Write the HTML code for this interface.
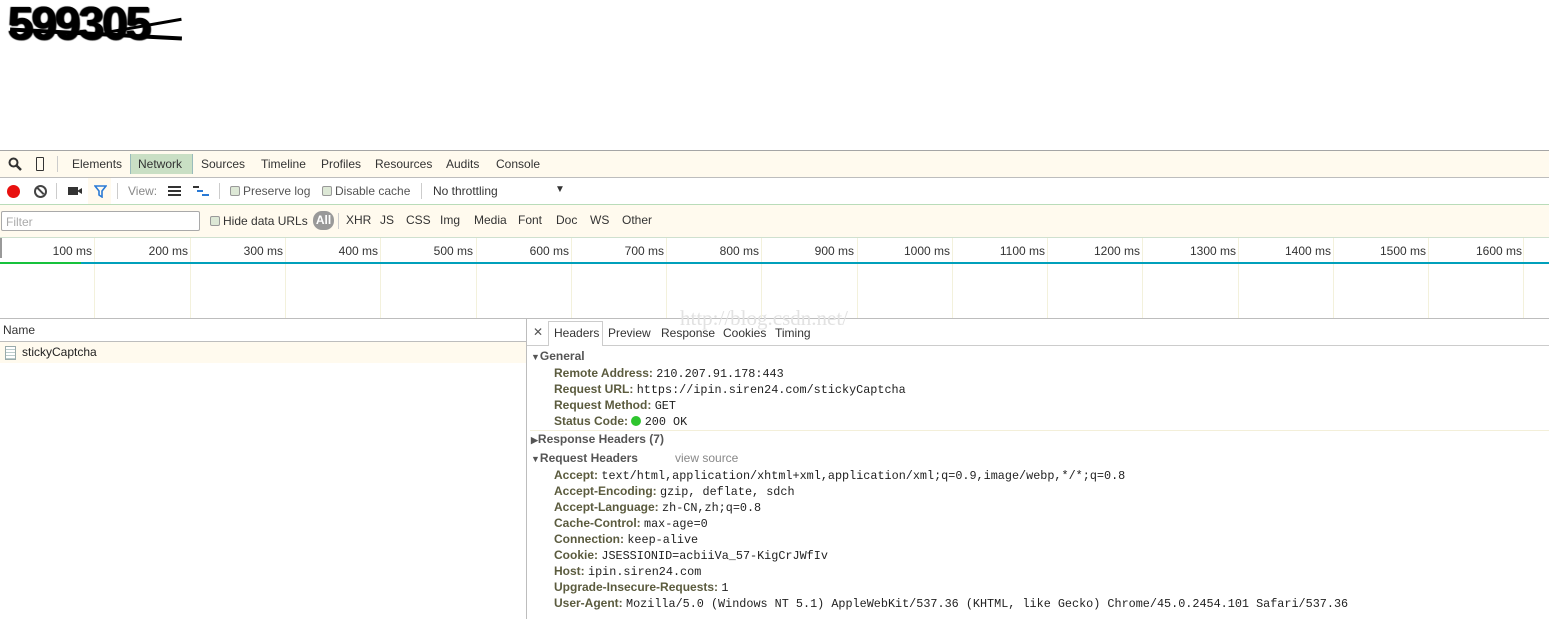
<!DOCTYPE html>
<html><head><meta charset="utf-8"><style>
*{margin:0;padding:0;box-sizing:border-box}
body{width:1549px;height:619px;background:#fff;position:relative;overflow:hidden;font-family:"Liberation Sans",sans-serif;font-size:12px;color:#303030}
.a{position:absolute;white-space:nowrap}
.mono{font-family:"Liberation Mono",monospace;font-size:11.8px;color:#222}
.lbl{font-weight:bold;color:#5b5b3e}
.vl{position:absolute;width:1px;background:#f3f1dc}
.cb{display:inline-block;width:10px;height:10px;border:1px solid #999;border-radius:2px;background:#dde8d6;vertical-align:-1px;margin-right:3px}
</style></head><body>
<div class="a" style="left:8px;top:-4px;font:bold 46px 'Liberation Sans',sans-serif;letter-spacing:-2px;color:#000;text-shadow:1px 1px 1px #000,-1px 0 1px #000">599305</div>
<div class="a" style="left:10px;top:32px;width:172px;height:4px;background:#000;transform:rotate(3deg)"></div>
<div class="a" style="left:110px;top:24px;width:72px;height:3px;background:#000;transform:rotate(-10deg)"></div>

<!-- toolbar 1 -->
<div class="a" style="left:0;top:150px;width:1549px;height:28px;background:#fffaee;border-top:1px solid #a5a5a5;border-bottom:1px solid #bdbdbd"></div>
<svg class="a" style="left:8px;top:157px" width="14" height="14"><circle cx="5.5" cy="5.5" r="4" fill="none" stroke="#333" stroke-width="2"/><line x1="8.5" y1="8.5" x2="13" y2="13" stroke="#333" stroke-width="2.5"/></svg>
<div class="a" style="left:36px;top:157px;width:8px;height:14px;border:1.5px solid #333;border-radius:1px"></div>
<div class="a" style="left:57px;top:156px;width:1px;height:16px;background:#ccc"></div>
<div class="a" style="left:130px;top:154px;width:63px;height:20px;background:#c9dfc4;border-left:1px solid #9bb;border-right:1px solid #9bb"></div>
<div class="a" style="left:72px;top:157px;color:#333">Elements</div>
<div class="a" style="left:138px;top:157px;color:#333">Network</div>
<div class="a" style="left:201px;top:157px;color:#333">Sources</div>
<div class="a" style="left:261px;top:157px;color:#333">Timeline</div>
<div class="a" style="left:321px;top:157px;color:#333">Profiles</div>
<div class="a" style="left:375px;top:157px;color:#333">Resources</div>
<div class="a" style="left:446px;top:157px;color:#333">Audits</div>
<div class="a" style="left:496px;top:157px;color:#333">Console</div>

<!-- toolbar 2 -->
<div class="a" style="left:0;top:204px;width:1549px;height:1px;background:#b9dcb9"></div>
<div class="a" style="left:7px;top:185px;width:13px;height:13px;border-radius:50%;background:#e8110f"></div>
<div class="a" style="left:34px;top:185px;width:13px;height:13px;border-radius:50%;border:2px solid #444"></div>
<div class="a" style="left:36px;top:190px;width:9px;height:2px;background:#444;transform:rotate(45deg)"></div>
<div class="a" style="left:56px;top:183px;width:1px;height:16px;background:#ccc"></div>
<div class="a" style="left:68px;top:187px;width:10px;height:8px;background:#333"></div>
<div class="a" style="left:77px;top:188px;border-right:5px solid #333;border-top:3px solid transparent;border-bottom:3px solid transparent;width:0;height:0"></div>
<div class="a" style="left:88px;top:178px;width:23px;height:26px;background:#fffaee"></div>
<svg class="a" style="left:94px;top:185px" width="13" height="13"><path d="M1 1H12L8 6V12L5 10V6Z" fill="none" stroke="#2a7ad5" stroke-width="1.6"/></svg>
<div class="a" style="left:117px;top:183px;width:1px;height:16px;background:#ccc"></div>
<div class="a" style="left:128px;top:184px;color:#888">View:</div>
<div class="a" style="left:168px;top:186px;width:13px;height:10px;background:repeating-linear-gradient(#333 0 2px,transparent 2px 4px)"></div>
<div class="a" style="left:193px;top:186px;width:6px;height:2px;background:#333"></div>
<div class="a" style="left:197px;top:190px;width:6px;height:2px;background:#2a7ad5"></div>
<div class="a" style="left:202px;top:194px;width:7px;height:2px;background:#2a7ad5"></div>
<div class="a" style="left:219px;top:183px;width:1px;height:16px;background:#ccc"></div>
<div class="a" style="left:230px;top:184px;color:#555"><span class="cb"></span>Preserve log</div>
<div class="a" style="left:322px;top:184px;color:#555"><span class="cb"></span>Disable cache</div>
<div class="a" style="left:421px;top:183px;width:1px;height:16px;background:#ccc"></div>
<div class="a" style="left:433px;top:184px;color:#333">No throttling</div>
<div class="a" style="left:555px;top:184px;font-size:10px;color:#333">▼</div>

<!-- toolbar 3 -->
<div class="a" style="left:0;top:205px;width:1549px;height:33px;background:#fffaee;border-bottom:1px solid #cfe0cf"></div>
<div class="a" style="left:1px;top:211px;width:199px;height:20px;background:#fff;border:1px solid #a9a9a9;border-radius:2px;color:#aaa;padding:3px 4px">Filter</div>
<div class="a" style="left:210px;top:214px;color:#333"><span class="cb"></span>Hide data URLs</div>
<div class="a" style="left:313px;top:211px;width:21px;height:19px;border-radius:9px;background:#999;color:#fff;font-weight:bold;text-align:center;padding-top:2px">All</div>
<div class="a" style="left:338px;top:213px;width:1px;height:16px;background:#ccc"></div>
<div class="a" style="left:346px;top:213px;color:#333">XHR</div>
<div class="a" style="left:380px;top:213px;color:#333">JS</div>
<div class="a" style="left:406px;top:213px;color:#333">CSS</div>
<div class="a" style="left:440px;top:213px;color:#333">Img</div>
<div class="a" style="left:474px;top:213px;color:#333">Media</div>
<div class="a" style="left:518px;top:213px;color:#333">Font</div>
<div class="a" style="left:556px;top:213px;color:#333">Doc</div>
<div class="a" style="left:590px;top:213px;color:#333">WS</div>
<div class="a" style="left:622px;top:213px;color:#333">Other</div>

<!-- timeline -->
<div class="a" style="left:0;top:238px;width:2px;height:20px;background:#999"></div>
<div class="a" style="left:0;top:262px;width:1549px;height:2px;background:#00a0bb"></div>
<div class="a" style="left:0;top:262px;width:81px;height:2px;background:#17c23c"></div>
<div class="a" style="left:0;top:318px;width:1549px;height:1px;background:#bdbdbd"></div>

<!-- request list -->
<div class="a" style="left:3px;top:323px;color:#333">Name</div>
<div class="a" style="left:0;top:341px;width:527px;height:1px;background:#bdbdbd"></div>
<div class="a" style="left:0;top:342px;width:527px;height:21px;background:#fffaee"></div>
<div class="a" style="left:5px;top:346px;width:11px;height:14px;border:1px solid #9aa;background:repeating-linear-gradient(#fff 0 2px,#bcc 2px 3px)"></div>
<div class="a" style="left:22px;top:345px;color:#222">stickyCaptcha</div>
<div class="a" style="left:526px;top:319px;width:1px;height:300px;background:#bdbdbd"></div>

<!-- details -->
<div class="a" style="left:527px;top:345px;width:1022px;height:1px;background:#ccc"></div>
<div class="a" style="left:533px;top:325px;color:#555">✕</div>
<div class="a" style="left:548px;top:321px;width:55px;height:25px;background:#fff;border:1px solid #ccc;border-bottom:none"></div>
<div class="a" style="left:554px;top:326px;color:#333">Headers</div>
<div class="a" style="left:608px;top:326px;color:#333">Preview</div>
<div class="a" style="left:661px;top:326px;color:#333">Response</div>
<div class="a" style="left:723px;top:326px;color:#333">Cookies</div>
<div class="a" style="left:775px;top:326px;color:#333">Timing</div>
<div class="a" style="left:680px;top:306px;font:21px 'Liberation Serif',serif;color:#e2e2e2">http://blog.csdn.net/</div>

<div class="a lbl" style="left:531px;top:349px;color:#555"><span style="font-size:9px">▼</span>General</div>
<div class="a" style="left:554px;top:366px"><span class="lbl">Remote Address:</span> <span class="mono">210.207.91.178:443</span></div>
<div class="a" style="left:554px;top:382px"><span class="lbl">Request URL:</span> <span class="mono">https://ipin.siren24.com/stickyCaptcha</span></div>
<div class="a" style="left:554px;top:398px"><span class="lbl">Request Method:</span> <span class="mono">GET</span></div>
<div class="a" style="left:554px;top:414px"><span class="lbl">Status Code:</span> <span style="display:inline-block;width:10px;height:10px;border-radius:50%;background:#2ec52e;vertical-align:-1px"></span> <span class="mono">200 OK</span></div>
<div class="a" style="left:530px;top:430px;width:1019px;height:1px;background:#f3efd9"></div>
<div class="a lbl" style="left:531px;top:432px;color:#555"><span style="font-size:9px">▶</span>Response Headers (7)</div>
<div class="a lbl" style="left:531px;top:451px;color:#555"><span style="font-size:9px">▼</span>Request Headers</div>
<div class="a" style="left:675px;top:451px;color:#888">view source</div>
<div class="a" style="left:554px;top:468px"><span class="lbl">Accept:</span> <span class="mono">text/html,application/xhtml+xml,application/xml;q=0.9,image/webp,*/*;q=0.8</span></div>
<div class="a" style="left:554px;top:484px"><span class="lbl">Accept-Encoding:</span> <span class="mono">gzip, deflate, sdch</span></div>
<div class="a" style="left:554px;top:500px"><span class="lbl">Accept-Language:</span> <span class="mono">zh-CN,zh;q=0.8</span></div>
<div class="a" style="left:554px;top:516px"><span class="lbl">Cache-Control:</span> <span class="mono">max-age=0</span></div>
<div class="a" style="left:554px;top:532px"><span class="lbl">Connection:</span> <span class="mono">keep-alive</span></div>
<div class="a" style="left:554px;top:548px"><span class="lbl">Cookie:</span> <span class="mono">JSESSIONID=acbiiVa_57-KigCrJWfIv</span></div>
<div class="a" style="left:554px;top:564px"><span class="lbl">Host:</span> <span class="mono">ipin.siren24.com</span></div>
<div class="a" style="left:554px;top:580px"><span class="lbl">Upgrade-Insecure-Requests:</span> <span class="mono">1</span></div>
<div class="a" style="left:554px;top:596px"><span class="lbl">User-Agent:</span> <span class="mono">Mozilla/5.0 (Windows NT 5.1) AppleWebKit/537.36 (KHTML, like Gecko) Chrome/45.0.2454.101 Safari/537.36</span></div>

<div class="vl" style="left:94px;top:238px;height:24px"></div>
<div class="vl" style="left:190px;top:238px;height:24px"></div>
<div class="vl" style="left:285px;top:238px;height:24px"></div>
<div class="vl" style="left:380px;top:238px;height:24px"></div>
<div class="vl" style="left:476px;top:238px;height:24px"></div>
<div class="vl" style="left:571px;top:238px;height:24px"></div>
<div class="vl" style="left:666px;top:238px;height:24px"></div>
<div class="vl" style="left:761px;top:238px;height:24px"></div>
<div class="vl" style="left:857px;top:238px;height:24px"></div>
<div class="vl" style="left:952px;top:238px;height:24px"></div>
<div class="vl" style="left:1047px;top:238px;height:24px"></div>
<div class="vl" style="left:1142px;top:238px;height:24px"></div>
<div class="vl" style="left:1238px;top:238px;height:24px"></div>
<div class="vl" style="left:1333px;top:238px;height:24px"></div>
<div class="vl" style="left:1428px;top:238px;height:24px"></div>
<div class="vl" style="left:1523px;top:238px;height:24px"></div>
<div class="vl" style="left:94px;top:264px;height:54px"></div>
<div class="vl" style="left:190px;top:264px;height:54px"></div>
<div class="vl" style="left:285px;top:264px;height:54px"></div>
<div class="vl" style="left:380px;top:264px;height:54px"></div>
<div class="vl" style="left:476px;top:264px;height:54px"></div>
<div class="vl" style="left:571px;top:264px;height:54px"></div>
<div class="vl" style="left:666px;top:264px;height:54px"></div>
<div class="vl" style="left:761px;top:264px;height:54px"></div>
<div class="vl" style="left:857px;top:264px;height:54px"></div>
<div class="vl" style="left:952px;top:264px;height:54px"></div>
<div class="vl" style="left:1047px;top:264px;height:54px"></div>
<div class="vl" style="left:1142px;top:264px;height:54px"></div>
<div class="vl" style="left:1238px;top:264px;height:54px"></div>
<div class="vl" style="left:1333px;top:264px;height:54px"></div>
<div class="vl" style="left:1428px;top:264px;height:54px"></div>
<div class="vl" style="left:1523px;top:264px;height:54px"></div>

<div class="a" style="right:1457px;top:244px;color:#333">100 ms</div>
<div class="a" style="right:1361px;top:244px;color:#333">200 ms</div>
<div class="a" style="right:1266px;top:244px;color:#333">300 ms</div>
<div class="a" style="right:1171px;top:244px;color:#333">400 ms</div>
<div class="a" style="right:1076px;top:244px;color:#333">500 ms</div>
<div class="a" style="right:980px;top:244px;color:#333">600 ms</div>
<div class="a" style="right:885px;top:244px;color:#333">700 ms</div>
<div class="a" style="right:790px;top:244px;color:#333">800 ms</div>
<div class="a" style="right:695px;top:244px;color:#333">900 ms</div>
<div class="a" style="right:599px;top:244px;color:#333">1000 ms</div>
<div class="a" style="right:504px;top:244px;color:#333">1100 ms</div>
<div class="a" style="right:409px;top:244px;color:#333">1200 ms</div>
<div class="a" style="right:313px;top:244px;color:#333">1300 ms</div>
<div class="a" style="right:218px;top:244px;color:#333">1400 ms</div>
<div class="a" style="right:123px;top:244px;color:#333">1500 ms</div>
<div class="a" style="right:27px;top:244px;color:#333">1600 ms</div>
</body></html>
